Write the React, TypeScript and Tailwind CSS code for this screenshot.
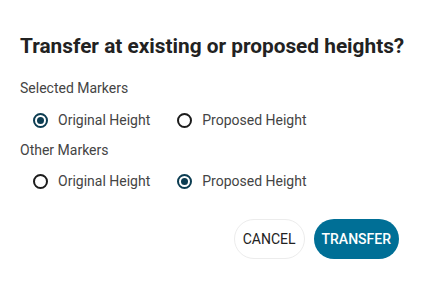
import React, { useState } from 'react';

type Choice = 'original' | 'proposed';

const Radio: React.FC<{ checked: boolean; label: string; onClick: () => void }> = ({ checked, label, onClick }) => (
  <button type="button" onClick={onClick} className="flex items-center h-[32px] gap-[10px] text-[14px] text-[#444]">
    <span
      className={`w-[15px] h-[15px] rounded-full border-2 flex items-center justify-center ${
        checked ? 'border-[#0c3d52]' : 'border-[#1c1c1c]'
      }`}
    >
      {checked && <span className="w-[7px] h-[7px] rounded-full bg-[#0c3d52]" />}
    </span>
    <span>{label}</span>
  </button>
);

export default function App() {
  const [selected, setSelected] = useState<Choice>('original');
  const [other, setOther] = useState<Choice>('proposed');

  return (
    <div className="w-[424px] h-[285px] bg-white pt-[32px] pl-[20px] pr-[25px] font-['Roboto',sans-serif]">
      <h2 className="text-[20.8px] leading-[28px] font-bold text-[#222] whitespace-nowrap">
        Transfer at existing or proposed heights?
      </h2>

      <div className="mt-[18px] text-[14px] leading-[20px] text-[#444]">Selected Markers</div>
      <div className="mt-[6px] pl-[13px] flex gap-[27px]">
        <Radio checked={selected === 'original'} label="Original Height" onClick={() => setSelected('original')} />
        <Radio checked={selected === 'proposed'} label="Proposed Height" onClick={() => setSelected('proposed')} />
      </div>

      <div className="mt-[4px] text-[14px] leading-[20px] text-[#444]">Other Markers</div>
      <div className="mt-[5px] pl-[13px] flex gap-[27px]">
        <Radio checked={other === 'original'} label="Original Height" onClick={() => setOther('original')} />
        <Radio checked={other === 'proposed'} label="Proposed Height" onClick={() => setOther('proposed')} />
      </div>

      <div className="mt-[22px] flex justify-end gap-[9px]">
        <button type="button" className="h-[40px] px-[8px] rounded-full border border-[#ececec] text-[14px] text-[#222] uppercase">
          Cancel
        </button>
        <button type="button" className="h-[40px] px-[8px] rounded-full bg-[#006f96] text-[14px] font-medium text-white uppercase">
          Transfer
        </button>
      </div>
    </div>
  );
}
